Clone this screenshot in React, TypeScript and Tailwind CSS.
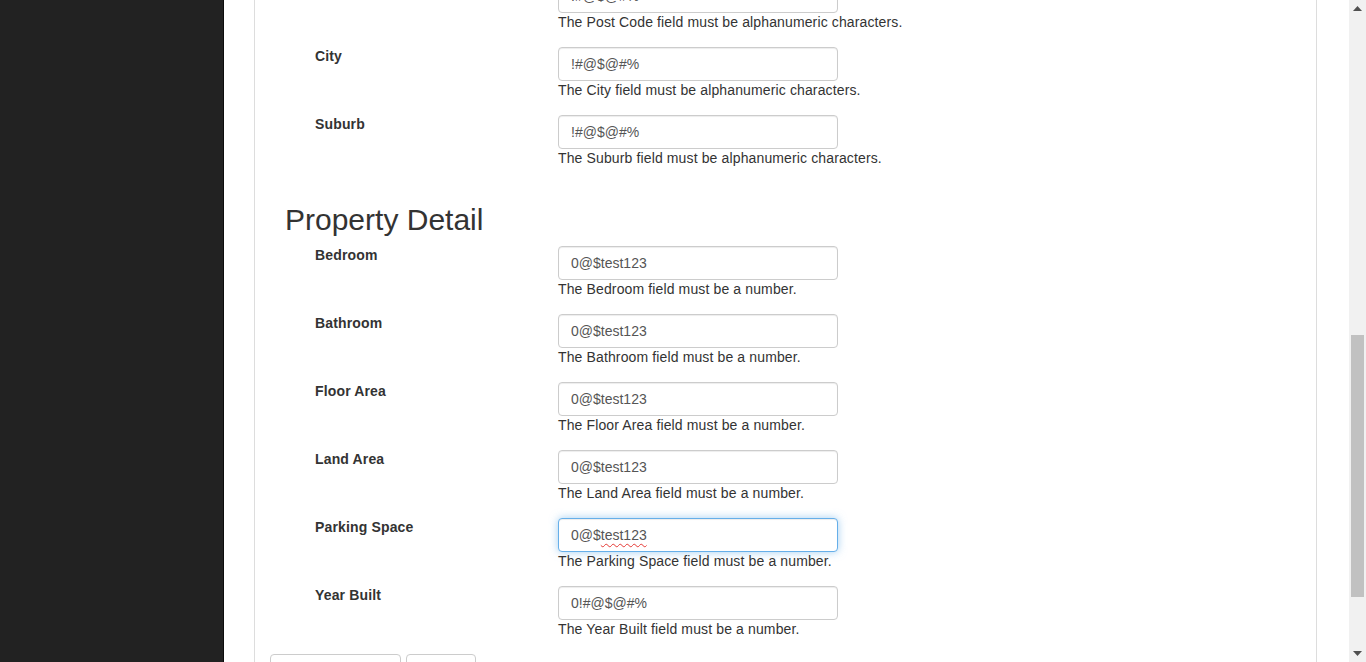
import React from "react";

type Row = { label: string; value: string; help: string; focused?: boolean };

const addressRows: Row[] = [
  { label: "Post Code", value: "!#@$@#%", help: "The Post Code field must be alphanumeric characters." },
  { label: "City", value: "!#@$@#%", help: "The City field must be alphanumeric characters." },
  { label: "Suburb", value: "!#@$@#%", help: "The Suburb field must be alphanumeric characters." },
];

const propertyRows: Row[] = [
  { label: "Bedroom", value: "0@$test123", help: "The Bedroom field must be a number." },
  { label: "Bathroom", value: "0@$test123", help: "The Bathroom field must be a number." },
  { label: "Floor Area", value: "0@$test123", help: "The Floor Area field must be a number." },
  { label: "Land Area", value: "0@$test123", help: "The Land Area field must be a number." },
  { label: "Parking Space", value: "0@$test123", help: "The Parking Space field must be a number.", focused: true },
  { label: "Year Built", value: "0!#@$@#%", help: "The Year Built field must be a number." },
];

function FormRow({ row }: { row: Row }) {
  return (
    <div className="flex pl-[45px] mb-[15px]">
      <label className="w-[243px] shrink-0 font-bold leading-[18px] tracking-[0.15px] text-[#333]">{row.label}</label>
      <div className="w-[280px] shrink-0">
        {row.focused ? (
          <div className="h-[34px] w-full rounded-[4px] border border-[#66afe9] bg-white px-[12px] leading-[32px] text-[#555] shadow-[inset_0_1px_1px_rgba(0,0,0,0.075),0_0_8px_rgba(102,175,233,0.6)]">
            0@$
            <span className="underline decoration-wavy decoration-[#e53935] decoration-1 underline-offset-[3px]">test123</span>
          </div>
        ) : (
          <input
            readOnly
            value={row.value}
            className="block h-[34px] w-full rounded-[4px] border border-[#ccc] bg-white px-[12px] text-[14px] text-[#555] shadow-[inset_0_1px_1px_rgba(0,0,0,0.075)] outline-none font-['Liberation_Sans',Arial,sans-serif]"
          />
        )}
        <p className="mt-[-1px] leading-5 tracking-[0.13px] text-[#333] whitespace-nowrap">{row.help}</p>
      </div>
    </div>
  );
}

export default function App() {
  return (
    <div className="flex h-[662px] w-[1366px] overflow-hidden bg-white font-['Liberation_Sans',Arial,sans-serif] text-[14px] text-[#333]">
      <aside className="w-[224px] shrink-0 border-r border-[#0c0c0c] bg-[#222]" />
      <main className="flex-1 overflow-hidden pl-[30px] pr-[32px]">
        <div className="flex flex-col border-x border-[#ddd] px-[15px] pb-[40px]">
          <div className="mt-[-21px] flex flex-col">
            {addressRows.map((r) => (
              <FormRow key={r.label} row={r} />
            ))}
            <h2 className="ml-[15px] mt-[20px] mb-[10px] text-[30px] font-normal leading-[33px] text-[#333]">
              Property Detail
            </h2>
            {propertyRows.map((r) => (
              <FormRow key={r.label} row={r} />
            ))}
            <div className="flex gap-[5px]">
              <button className="h-[34px] w-[131px] rounded-[4px] border border-[#ccc] bg-white px-[12px] text-[#333]">
                Save Property
              </button>
              <button className="h-[34px] w-[70px] rounded-[4px] border border-[#ccc] bg-white px-[12px] text-[#333]">
                Cancel
              </button>
            </div>
          </div>
        </div>
      </main>
      <div className="flex w-[17px] shrink-0 flex-col bg-[#f1f1f1]">
        <div className="flex h-[17px] items-center justify-center">
          <svg width="9" height="5" viewBox="0 0 9 5">
            <path d="M0 5 L4.5 0 L9 5 Z" fill="#505050" />
          </svg>
        </div>
        <div className="h-[318px]" />
        <div className="mx-[2px] h-[262px] bg-[#c1c1c1]" />
        <div className="flex-1" />
        <div className="flex h-[17px] items-center justify-center">
          <svg width="9" height="5" viewBox="0 0 9 5">
            <path d="M0 0 L9 0 L4.5 5 Z" fill="#505050" />
          </svg>
        </div>
      </div>
    </div>
  );
}
